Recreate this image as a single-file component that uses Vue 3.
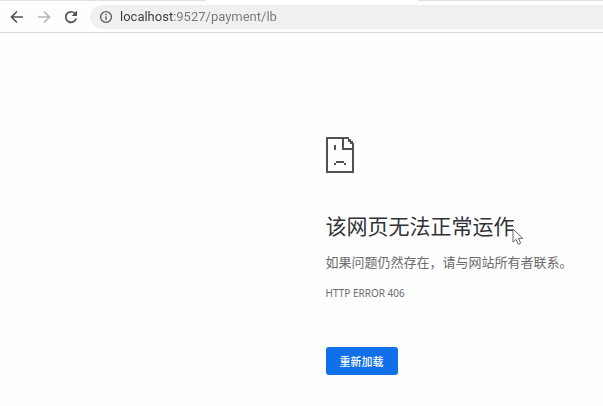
<script setup>
import { ref } from 'vue'

const address = ref('localhost:9527/payment/lb')
const reload = () => window.location.reload()
</script>

<template>
  <div class="browser">
    <div class="tabs">
      <span class="tab"></span>
      <span class="tab active"></span>
      <span class="tab rest"></span>
    </div>
    <header class="toolbar">
      <button class="tool" type="button" aria-label="后退">
        <svg viewBox="0 0 16 16"><path d="M14 8H3M8 2.5 2.5 8 8 13.5" /></svg>
      </button>
      <button class="tool muted" type="button" aria-label="前进">
        <svg viewBox="0 0 16 16"><path d="M2 8h11M8 2.5 13.5 8 8 13.5" /></svg>
      </button>
      <button class="tool" type="button" aria-label="刷新" @click="reload">
        <svg viewBox="0 0 16 16"><path d="M13.2 9.4A5.3 5.3 0 1 1 11.8 4.3L13 5.5" /><path class="solid" d="M14 1.5V7H8.5z" /></svg>
      </button>
      <div class="omnibox">
        <svg class="info" viewBox="0 0 14 14" aria-hidden="true"><circle cx="7" cy="7" r="5.4" /><path d="M7 6.3v3.8M7 3.8v1.4" /></svg>
        <input v-model="address" class="address" type="text" aria-label="地址" spellcheck="false" />
      </div>
    </header>
    <main class="page">
      <section class="message">
        <svg class="sad" viewBox="0 0 28 36" aria-hidden="true">
          <path d="M0 0H23V2H25V4H27V6H28V36H0ZM2 2V34H26V13H16V2ZM18 2V11H26V7H24V5H22V2Z" fill-rule="evenodd" />
          <path d="M8 8h2v5H8zM10 24h8v2h-8zM8 26h2v2H8zM18 26h2v2h-2z" />
        </svg>
        <h1>
          该网页无法正常运作
          <svg class="pointer" viewBox="0 0 12 18" aria-hidden="true"><path d="M1 1v13.2l3.1-2.8 2.2 4.9 2.4-1.1-2.2-4.8h4.2z" /></svg>
        </h1>
        <p class="hint">如果问题仍然存在，请与网站所有者联系。</p>
        <p class="code">HTTP ERROR 406</p>
        <button class="reload" type="button" @click="reload">重新加载</button>
      </section>
    </main>
  </div>
</template>

<style>
body {
  margin: 0;
  background: #fefefe;
}
</style>

<style scoped>
.browser {
  font-family: "Noto Sans", "Noto Sans CJK SC", sans-serif;
  color: #6a6b6e;
}
.tabs {
  display: grid;
  grid-template-columns: 206px 212px 1fr;
  height: 1px;
}
.tab {
  background: #dee1e6;
}
.tab.active {
  background: #fefefe;
}
.toolbar {
  display: flex;
  align-items: center;
  gap: 11px;
  height: 31px;
  padding-left: 9px;
  border-bottom: 1px solid #dcdddf;
}
.tool {
  display: flex;
  width: 16px;
  height: 16px;
  padding: 0;
  border: 0;
  background: none;
  color: #505356;
}
.tool.muted {
  color: #b5b6b8;
}
.tool svg {
  width: 16px;
  height: 16px;
  fill: none;
  stroke: currentColor;
  stroke-width: 1.7;
}
.tool .solid {
  fill: currentColor;
  stroke: none;
}
.omnibox {
  flex: 1;
  display: flex;
  align-items: center;
  gap: 7px;
  height: 24px;
  padding-left: 9px;
  border-radius: 12px 0 0 12px;
  background: #eef0f2;
}
.info {
  flex: none;
  width: 14px;
  height: 14px;
  fill: none;
  stroke: #5c5f63;
  stroke-width: 1.4;
}
.address {
  flex: 1;
  min-width: 0;
  padding: 0;
  border: 0;
  outline: 0;
  font: 13px/24px Roboto, sans-serif;
  color: transparent;
  background: linear-gradient(90deg, #37393c 53px, #76787b 53px);
  background-clip: text;
  caret-color: #37393c;
}
.page {
  padding: 104px 0 30px 54%;
}
.message {
  display: flex;
  flex-direction: column;
  align-items: flex-start;
}
.sad {
  width: 28px;
  height: 36px;
  fill: #535355;
}
h1 {
  position: relative;
  margin: 38px 0 0;
  font-size: 21px;
  font-weight: 400;
  line-height: 30px;
  color: #303338;
  white-space: nowrap;
}
.pointer {
  position: absolute;
  right: -9px;
  top: 17px;
  width: 12px;
  height: 18px;
  fill: #fefefe;
  stroke: #66686d;
}
.hint {
  margin: 11px 0 0;
  font-size: 13px;
  line-height: 20px;
  white-space: nowrap;
}
.code {
  margin: 13px 0 0;
  font-size: 10px;
  line-height: 16px;
}
.reload {
  margin-top: 46px;
  padding: 0 14px;
  border: 0;
  border-radius: 3px;
  font: 500 11px/28px "Noto Sans CJK SC", sans-serif;
  color: #fff;
  background: #1070ea;
}
</style>
